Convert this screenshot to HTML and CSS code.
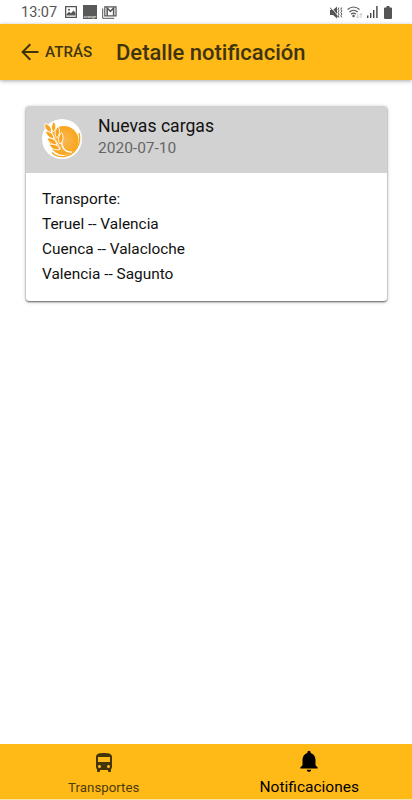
FILE: index.html
```html
<!DOCTYPE html>
<html lang="es">
<head>
    <meta charset="UTF-8">
    <meta name="viewport" content="width=device-width, initial-scale=1.0">
    <title>Detalle notificación</title>
    <link rel="stylesheet" href="styles.css">
</head>
<body>
    <div class="status-bar">
        <span class="clock">13:07</span>
        <svg class="icon-image" width="12" height="12" viewBox="0 0 12 12">
            <path fill="#555" fill-rule="evenodd" d="M0 0h12v12H0zM1.300 1.300v9.400h9.400V1.300z"/>
            <path fill="#555" d="M1.500 9.500V8.200l2.500-2.500 2 1.500 2.500-2.700 2 2.500v2.500z"/>
            <circle cx="4" cy="3.700" r="1" fill="#555"/>
        </svg>
        <span class="operator">orange</span>
        <svg class="icon-mail" width="15" height="13" viewBox="0 0 15 13">
            <path fill="none" stroke="#555" d="M.7 2.500v9.800h11.500"/>
            <path fill="none" stroke="#555" stroke-width="1.200" d="M2.800.8h11.200v9H2.800z"/>
            <path fill="none" stroke="#555" stroke-width="1.500" d="M5.200 9.500V2l3.200 3.300L11.600 2v7.500"/>
        </svg>
        <div class="status-right">
            <svg width="13" height="13" viewBox="0 0 13 13">
                <path fill="#555" d="M0 4h3l4-3.500v12L3 9H0z"/>
                <path fill="none" stroke="#fff" stroke-width=".8" d="M1 1l8 10"/>
                <path fill="none" stroke="#555" stroke-width="1" d="M0 1.500l8 10M9 1.500l-1 1.700 1 1.600-1 1.700 1 1.600-1 1.700 1 1.600M11.800 1.500l-1 1.700 1 1.600-1 1.700 1 1.600-1 1.700 1 1.600"/>
            </svg>
            <svg class="icon-wifi" width="16" height="13" viewBox="0 0 16 13">
                <path fill="none" stroke="#555" stroke-width="1.200" d="M.6 3.500Q6.500-1.500 12.500 3.500M2.500 6Q6.500 2.500 10.600 6M4.200 8.200Q6.500 6.200 8.800 8.200"/>
                <circle cx="6.500" cy="10" r="1.200" fill="#555"/>
                <path fill="none" stroke="#bbb" stroke-width=".8" d="M10.700 7.500v4.500M9.200 10.500l1.500 1.500 1.500-1.500M14 12V7.500M12.500 9L14 7.500 15.500 9"/>
            </svg>
            <svg class="icon-signal" width="12" height="12" viewBox="0 0 12 12">
                <path fill="#444" d="M0 9.500h1.400V12H0zM3 7h1.400v5H3zM6 4h1.400v8H6zM9.200 0h1.400v12H9.200z"/>
            </svg>
            <svg class="icon-battery" width="8" height="13" viewBox="0 0 8 13">
                <path fill="#555" d="M2.500 0h3v1.500H7q1 0 1 1V12q0 1-1 1H1q-1 0-1-1V2.500q0-1 1-1h1.500z"/>
            </svg>
        </div>
    </div>

    <header class="toolbar">
        <a class="back-button">
            <svg width="18" height="18" viewBox="0 0 18 18">
                <path fill="none" stroke="#40340f" stroke-width="2" d="M17.500 9H2M9.300 1.300L1.600 9l7.700 7.700"/>
            </svg>
            <span>ATRÁS</span>
        </a>
        <h1>Detalle notificación</h1>
    </header>

    <main class="content">
        <div class="card">
            <div class="card-header">
                <svg class="avatar" width="40" height="40" viewBox="0 0 40 40">
                    <defs>
                        <radialGradient id="grain">
                            <stop offset="0" stop-color="#f8b755"/>
                            <stop offset="1" stop-color="#f9a61d"/>
                        </radialGradient>
                    </defs>
                    <circle cx="20" cy="20" r="20" fill="#fff"/>
                    <circle cx="22" cy="21.500" r="14.500" fill="url(#grain)"/>
                    <path fill="none" stroke="#fff" stroke-width="1.300" d="M20 22c-1 7 4 12 10 11"/>
                    <path fill="none" stroke="#f9a61d" stroke-width="1.300" d="M37 14c3 11-4 22-15 23.500-5 .5-9-1-12-4"/>
                    <g fill="#f6a51f" stroke="#fff" stroke-width=".9">
                        <path d="M9 14C4 12 2 8 3 4.500 8 6 10.500 9 9 14z"/>
                        <path d="M12 20c-5-1-8-4-8.500-8C9 13 12 15 12 20z"/>
                        <path d="M15 26c-5 0-9-3-10-7 6 0 9 2 10 7z"/>
                        <path d="M18 30.500c-5 1-9-1-11-5 6-1 9 1 11 5z"/>
                        <path d="M11 13c-2.500-4-1.500-8 1-10.500 2.500 4 2.500 7.500-1 10.500z"/>
                        <path d="M14.500 19c-2.500-4-1.500-8.500 1.500-11.500 2.500 4 2 8.500-1.500 11.500z"/>
                        <path d="M18 25c-2.500-4-1.500-8.500 1.500-11.500 2.500 4 2 8.500-1.500 11.500z"/>
                    </g>
                    <path fill="none" stroke="#fff" stroke-width=".8" d="M9 11c2 7 6 12 9.500 19"/>
                </svg>
                <div class="card-titles">
                    <h2>Nuevas cargas</h2>
                    <p>2020-07-10</p>
                </div>
            </div>
            <div class="card-body">
                <p>Transporte:</p>
                <p>Teruel -- Valencia</p>
                <p>Cuenca -- Valacloche</p>
                <p>Valencia -- Sagunto</p>
            </div>
        </div>
    </main>

    <nav class="tab-bar">
        <a class="tab">
            <svg width="24" height="24" viewBox="0 0 24 24">
                <path fill="#443509" d="M4 16c0 .88.39 1.670 1 2.220V20c0 .55.45 1 1 1h1c.55 0 1-.45 1-1v-1h8v1c0 .55.45 1 1 1h1c.55 0 1-.45 1-1v-1.780c.61-.55 1-1.340 1-2.220V6c0-3.500-3.580-4-8-4s-8 .5-8 4v10zm3.500 1c-.83 0-1.500-.67-1.500-1.500S6.670 14 7.500 14s1.500.67 1.500 1.500S8.330 17 7.500 17zm9 0c-.83 0-1.500-.67-1.500-1.500s.67-1.500 1.500-1.500 1.500.67 1.500 1.500-.67 1.500-1.500 1.500zm1.500-6H6V6h12v5z"/>
            </svg>
            <span>Transportes</span>
        </a>
        <a class="tab active">
            <svg width="26" height="26" viewBox="0 0 24 24">
                <path fill="#000" d="M12 22c1.100 0 2-.9 2-2h-4c0 1.100.89 2 2 2zm6-6v-5c0-3.070-1.640-5.640-4.500-6.320V4c0-.83-.67-1.500-1.500-1.500s-1.500.67-1.500 1.500v.68C7.630 5.360 6 7.920 6 11v5l-2 2v1h16v-1l-2-2z"/>
            </svg>
            <span>Notificaciones</span>
        </a>
    </nav>
</body>
</html>
```
FILE: styles.css
```css
* {
    box-sizing: border-box;
}
body {
    margin: 0;
    height: 800px;
    display: flex;
    flex-direction: column;
    background-color: #fff;
    font-family: Roboto, sans-serif;
    color: #111;
    overflow: hidden;
}
h1, h2, p {
    margin: 0;
    font-weight: 400;
}
svg {
    display: block;
    flex: none;
}
.status-bar {
    height: 24px;
    display: flex;
    align-items: center;
    padding: 0 20px 0 21px;
}
.clock {
    width: 44px;
    padding-top: 1px;
    font-size: 14.500px;
    line-height: 24px;
    color: #555;
}
.operator {
    width: 14px;
    height: 14px;
    margin: 0 5px 0 6px;
    padding-top: 9px;
    background-color: #595959;
    color: #fff;
    font-size: 4px;
    line-height: 5px;
    text-align: center;
}
.status-right {
    margin-left: auto;
    display: flex;
    align-items: center;
}
.icon-wifi {
    margin-left: 4px;
}
.icon-signal {
    margin-left: 4px;
}
.icon-battery {
    margin-left: 5px;
}
.toolbar {
    height: 56px;
    flex: none;
    display: flex;
    align-items: center;
    padding-left: 21px;
    background-color: #ffba18;
    box-shadow: 0 1px 4px rgba(0, 0, 0, 0.35);
    color: #40340f;
}
.back-button {
    width: 95px;
    display: flex;
    align-items: center;
    gap: 6px;
    font-size: 15.200px;
    font-weight: 500;
}
.toolbar h1 {
    font-size: 22px;
    font-weight: 500;
}
.content {
    flex: 1;
    padding: 26px 25px 0 26px;
}
.card {
    height: 195px;
    background-color: #fff;
    border-radius: 3px;
    box-shadow: 0 1px 2px rgba(0, 0, 0, 0.6), 0 1px 5px rgba(0, 0, 0, 0.15);
    overflow: hidden;
}
.card-header {
    height: 67px;
    display: flex;
    gap: 16px;
    padding: 13px 16px 0;
    background-color: #d2d2d2;
}
.card-titles {
    margin-top: -4px;
}
.card-titles h2 {
    font-size: 17.600px;
    line-height: 23px;
}
.card-titles p {
    font-size: 15.500px;
    line-height: 20px;
    color: #666;
}
.card-body {
    padding: 14px 16px;
    font-size: 15.400px;
    line-height: 25px;
}
.tab-bar {
    height: 56px;
    flex: none;
    display: flex;
    padding-left: 1px;
    background-color: #ffba18;
    border-bottom: 1px solid #fbe3a4;
}
.tab {
    flex: 1;
    display: flex;
    flex-direction: column;
    align-items: center;
    padding-top: 7px;
    font-size: 13.300px;
    line-height: 17px;
    color: #4d3c0c;
}
.tab span {
    margin-top: 4px;
}
.tab.active {
    padding-top: 4px;
    font-size: 15.500px;
    color: #000;
}
.tab.active span {
    margin-top: 5px;
}
```
